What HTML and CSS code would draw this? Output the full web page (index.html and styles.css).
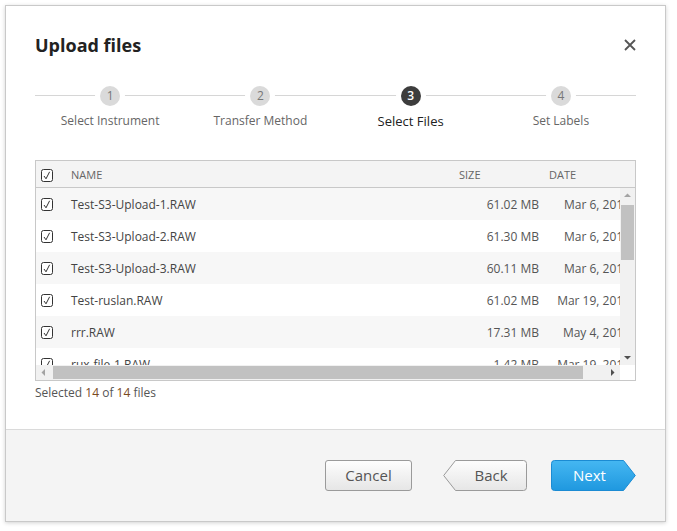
FILE: index.html
```html
<!DOCTYPE html>
<html>
<head>
<meta charset="utf-8">
<link rel="stylesheet" href="styles.css">
</head>
<body>
<div class="dialog">
  <div class="dialog-body">
    <div class="header">
      <h1 class="title">Upload files</h1>
      <button class="close" aria-label="Close">
        <svg width="12" height="12" viewBox="0 0 12 12"><path d="M1 1 L11 11 M11 1 L1 11" stroke="#555" stroke-width="1.8" fill="none"/></svg>
      </button>
    </div>
    <div class="stepper">
      <div class="step"><span class="circle">1</span><span class="label">Select Instrument</span></div>
      <div class="step"><span class="circle">2</span><span class="label">Transfer Method</span></div>
      <div class="step active"><span class="circle">3</span><span class="label">Select Files</span></div>
      <div class="step"><span class="circle">4</span><span class="label">Set Labels</span></div>
    </div>
    <div class="table">
      <div class="thead">
        <span class="cb"><svg width="12" height="13" viewBox="0 0 12 13"><rect x="0.5" y="0.5" width="11" height="12" rx="2" fill="#fff" stroke="#333"/><path d="M3 7 L5 9.8 L8.6 2.8" stroke="#333" stroke-width="1" fill="none"/></svg></span>
        <span class="th">NAME</span>
        <span class="th">SIZE</span>
        <span class="th">DATE</span>
      </div>
      <div class="tbody">
        <div class="viewport">
          <div class="rows" id="rows"></div>
        </div>
        <div class="vbar">
          <span class="sbtn"><svg width="15" height="15" viewBox="0 0 15 15"><path d="M4 9h7L7.5 5.5z" fill="#a3a3a3"/></svg></span>
          <span class="vtrack"><span class="vthumb"></span></span>
          <span class="sbtn"><svg width="15" height="15" viewBox="0 0 15 15"><path d="M4 6h7L7.5 9.5z" fill="#505050"/></svg></span>
        </div>
        <div class="hbar">
          <span class="sbtn"><svg width="15" height="15" viewBox="0 0 15 15"><path d="M9 4v7L5.5 7.5z" fill="#a3a3a3"/></svg></span>
          <span class="htrack"><span class="hthumb"></span></span>
          <span class="sbtn"><svg width="15" height="15" viewBox="0 0 15 15"><path d="M6 4v7L9.5 7.5z" fill="#505050"/></svg></span>
        </div>
        <div class="corner"></div>
      </div>
    </div>
    <div class="selected">Selected <span class="num">14</span> of <span class="num">14</span> files</div>
  </div>
  <div class="footer">
    <button class="btn cancel">Cancel</button>
    <button class="btn arrow back">
      <svg class="shape" viewBox="0 0 84 31" preserveAspectRatio="none"><defs><linearGradient id="gb" x1="0" y1="0" x2="0" y2="1"><stop offset="0" stop-color="#fdfdfd"/><stop offset="1" stop-color="#e6e6e6"/></linearGradient></defs><path d="M12.5 0.5 H80.5 Q83.5 0.5 83.5 3.5 V27.5 Q83.5 30.5 80.5 30.5 H12.5 L0.7 15.5 Z" fill="url(#gb)" stroke="#9a9a9a"/></svg>
      <span class="txt">Back</span>
    </button>
    <button class="btn arrow next">
      <svg class="shape" viewBox="0 0 85 31" preserveAspectRatio="none"><defs><linearGradient id="gn" x1="0" y1="0" x2="0" y2="1"><stop offset="0" stop-color="#45b7f2"/><stop offset="1" stop-color="#1f98df"/></linearGradient></defs><path d="M0.5 3.5 Q0.5 0.5 3.5 0.5 H72.5 L84.3 15.5 L72.5 30.5 H3.5 Q0.5 30.5 0.5 27.5 Z" fill="url(#gn)" stroke="#1b8bd3"/></svg>
      <span class="txt">Next</span>
    </button>
  </div>
</div>
<script>
var data = [
  ["Test-S3-Upload-1.RAW","61.02 MB","Mar 6, 2019"],
  ["Test-S3-Upload-2.RAW","61.30 MB","Mar 6, 2019"],
  ["Test-S3-Upload-3.RAW","60.11 MB","Mar 6, 2019"],
  ["Test-ruslan.RAW","61.02 MB","Mar 19, 2019"],
  ["rrr.RAW","17.31 MB","May 4, 2019"],
  ["rux-file-1.RAW","1.42 MB","Mar 19, 2019"],
  ["rux-file-2.RAW","1.42 MB","Mar 19, 2019"],
  ["rux-file-3.RAW","1.40 MB","Mar 19, 2019"],
  ["sample-01.RAW","24.18 MB","Apr 2, 2019"],
  ["sample-02.RAW","24.77 MB","Apr 2, 2019"],
  ["sample-03.RAW","23.95 MB","Apr 2, 2019"],
  ["test-run-a.RAW","8.64 MB","Apr 15, 2019"],
  ["test-run-b.RAW","8.71 MB","Apr 15, 2019"],
  ["upload-check.RAW","3.05 MB","May 1, 2019"]
];
var cb = '<svg width="12" height="13" viewBox="0 0 12 13"><rect x="0.5" y="0.5" width="11" height="12" rx="2" fill="#fff" stroke="#333"/><path d="M3 7 L5 9.8 L8.6 2.8" stroke="#333" stroke-width="1" fill="none"/></svg>';
var html = "";
data.forEach(function(r){
  html += '<div class="row"><span class="cb">'+cb+'</span><span class="name">'+r[0]+'</span><span class="size">'+r[1]+'</span><span class="date">'+r[2]+'</span></div>';
});
document.getElementById("rows").innerHTML = html;
</script>
</body>
</html>
```
FILE: styles.css
```css
* { box-sizing: border-box; }
html, body { margin: 0; padding: 0; background: #fff; }
body { font-family: "Open Sans", "Liberation Sans", sans-serif; color: #444; }

.dialog {
  margin: 5px;
  width: 661px;
  height: 517px;
  border: 1px solid #c9c9c9;
  box-shadow: 0 1px 4px rgba(0,0,0,0.18);
  background: #fff;
  display: flex;
  flex-direction: column;
}
.dialog-body { flex: 1; padding: 0 29px; }

.header {
  height: 78px;
  display: flex;
  align-items: center;
  justify-content: space-between;
}
.title { margin: 0; font-size: 18px; font-weight: 700; color: #222; line-height: 24px; }
.close { border: 0; background: none; padding: 0; width: 12px; height: 12px; cursor: pointer; display: flex; }

.stepper { display: grid; grid-template-columns: repeat(4, 1fr); }
.step { position: relative; display: flex; flex-direction: column; align-items: center; padding-top: 2px; }
.step::before {
  content: ""; position: absolute; left: 0; right: 0; top: 11px; height: 1px; background: #d6d6d6;
}
.circle {
  position: relative;
  width: 20px; height: 20px; border-radius: 50%;
  background: #dadada; color: #777;
  font-size: 12px; line-height: 20px; text-align: center;
  box-shadow: 0 0 0 5px #fff;
}
.label { margin-top: 6px; font-size: 12px; line-height: 18px; color: #666; }
.step.active .circle { background: #3d3d3d; color: #fff; font-weight: 600; }
.step.active .label { color: #222; font-size: 13px; }

.table { margin-top: 30px; border: 1px solid #c8c8c8; }
.thead {
  height: 27px;
  padding-top: 2px;
  background: #f4f4f4;
  border-bottom: 1px solid #c8c8c8;
  display: grid;
  grid-template-columns: 35px 388px 90px 1fr;
  align-items: center;
  font-size: 11px;
  color: #666;
}
.th { line-height: 14px; }
.cb { display: flex; padding-left: 5px; }

.tbody {
  height: 192px;
  display: grid;
  grid-template-columns: 1fr 15px;
  grid-template-rows: 1fr 15px;
}
.viewport { overflow: hidden; min-width: 0; min-height: 0; }
.rows { width: 606px; }
.row {
  height: 32px;
  display: grid;
  grid-template-columns: 35px 388px 90px 93px;
  align-items: center;
  font-size: 12px;
  color: #444;
}
.row:nth-child(odd) { background: #f7f7f7; }
.row .size { text-align: right; padding-right: 10px; color: #555; }
.row .date { white-space: nowrap; color: #555; text-align: right; padding-right: 12px; }

.vbar, .hbar { background: #f1f1f1; display: flex; }
.vbar { flex-direction: column; }
.sbtn { width: 15px; height: 15px; flex: none; display: flex; }
.vtrack { flex: 1; padding: 2px 1px 0; }
.vthumb { display: block; height: 55px; background: #c1c1c1; }
.htrack { flex: 1; padding: 1px 0 1px 2px; }
.hthumb { display: block; width: 530px; height: 100%; background: #c1c1c1; }
.corner { background: #fff; }

.selected { margin-top: 3px; font-size: 12px; line-height: 18px; color: #555; }
.selected .num { color: #7a4a1e; }

.footer {
  height: 92px;
  background: #f4f4f4;
  border-top: 1px solid #dadada;
  display: flex;
  align-items: center;
  justify-content: flex-end;
  padding: 0 29px 1px 0;
}
.btn {
  font-family: "Open Sans", "Liberation Sans", sans-serif;
  font-size: 15px;
  height: 31px;
  padding: 0;
  cursor: pointer;
}
.cancel {
  width: 87px;
  color: #555;
  border: 1px solid #9a9a9a;
  border-radius: 3px;
  background: linear-gradient(#fdfdfd, #e6e6e6);
}
.arrow { position: relative; border: 0; background: none; }
.arrow .shape { position: absolute; left: 0; top: 0; width: 100%; height: 100%; }
.arrow .txt { position: relative; }
.back { width: 84px; margin-left: 31px; color: #555; padding-left: 12px; }
.next { width: 85px; margin-left: 24px; color: #fff; padding-right: 8px; }
```
